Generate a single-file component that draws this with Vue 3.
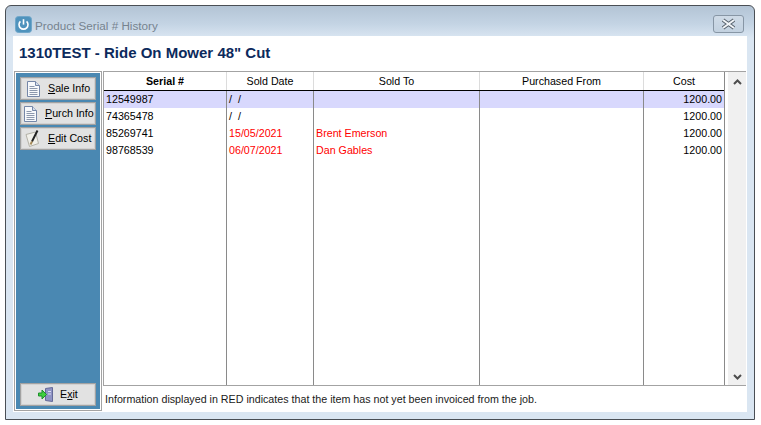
<template>
  <div class="window">
    <div class="titlebar">
      <svg class="app-icon" width="17" height="17" viewBox="0 0 17 17">
        <rect x="0.5" y="0.5" width="16" height="16" rx="3" fill="#4f93bd" stroke="#6fa6c9" />
        <path d="M5.4 5.4a4.500 4.500 0 1 0 6.200 0" fill="none" stroke="#fff" stroke-width="1.600" />
        <path d="M8.500 3.200v5.400" fill="none" stroke="#fff" stroke-width="1.600" />
      </svg>
      <span class="title">Product Serial # History</span>
      <button class="close" type="button">
        <svg width="17" height="12" viewBox="0 0 17 12">
          <path d="M3 2l11 8M14 2L3 10" stroke="#56616c" stroke-width="4" fill="none" />
          <path d="M3 2l11 8M14 2L3 10" stroke="#f2f5f8" stroke-width="2" fill="none" />
        </svg>
      </button>
    </div>

    <div class="client">
      <h1 class="heading">1310TEST - Ride On Mower 48" Cut</h1>

      <div class="content">
        <aside class="sidebar">
          <div class="side-inner">
            <button
              v-for="b in actions"
              :key="b.rest"
              class="side-btn"
              :class="b.cls"
              type="button"
            >
              <span class="btn-icon" v-html="b.icon" />
              <span class="btn-label"><u>{{ b.key }}</u>{{ b.rest }}</span>
            </button>
            <div class="spacer"></div>
            <button class="side-btn exit" type="button">
              <span class="btn-icon" v-html="exitIcon" />
              <span class="btn-label">E<u>x</u>it</span>
            </button>
          </div>
        </aside>

        <main class="main">
          <div class="grid-wrap">
            <div class="grid">
              <div class="row head">
                <div v-for="c in columns" :key="c" class="cell">{{ c }}</div>
              </div>
              <div
                v-for="(r, i) in rows"
                :key="r.serial"
                class="row"
                :class="{ selected: i === 0 }"
              >
                <div class="cell">{{ r.serial }}</div>
                <div class="cell" :class="{ red: r.red }">{{ r.date }}</div>
                <div class="cell" :class="{ red: r.red }">{{ r.to }}</div>
                <div class="cell"></div>
                <div class="cell num">{{ r.cost }}</div>
              </div>
              <div class="row filler">
                <div class="cell" v-for="n in 5" :key="n"></div>
              </div>
            </div>
            <div class="scrollbar">
              <svg width="9" height="6" viewBox="0 0 9 6"><path d="M1 5l3.500-3.500L8 5" fill="none" stroke="#4d4d4d" stroke-width="2" /></svg>
              <svg width="9" height="6" viewBox="0 0 9 6"><path d="M1 1l3.500 3.500L8 1" fill="none" stroke="#4d4d4d" stroke-width="2" /></svg>
            </div>
          </div>
          <p class="note">Information displayed in RED indicates that the item has not yet been invoiced from the job.</p>
        </main>
      </div>
    </div>
  </div>
</template>

<script setup>
const columns = ['Serial #', 'Sold Date', 'Sold To', 'Purchased From', 'Cost']

const rows = [
  { serial: '12549987', date: '/  /', to: '', cost: '1200.00', red: false },
  { serial: '74365478', date: '/  /', to: '', cost: '1200.00', red: false },
  { serial: '85269741', date: '15/05/2021', to: 'Brent Emerson', cost: '1200.00', red: true },
  { serial: '98768539', date: '06/07/2021', to: 'Dan Gables', cost: '1200.00', red: true }
]

const docIcon = `
<svg width="13" height="16" viewBox="0 0 13 16">
  <path d="M.5 .5h8l4 4v11H.5z" fill="#f7f9fc" stroke="#7587a8" />
  <path d="M8.500 .5v4h4" fill="#d5deeb" stroke="#7587a8" />
  <path d="M2.500 5.500h5M2.500 7.500h8M2.500 9.500h8M2.500 11.500h8M2.500 13.500h8" stroke="#8c98ad" />
</svg>`

const actions = [
  { key: 'S', rest: 'ale Info', icon: docIcon, cls: 'sale' },
  { key: 'P', rest: 'urch Info', icon: docIcon, cls: 'purch' },
  {
    key: 'E',
    rest: 'dit Cost',
    cls: 'edit',
    icon: `
<svg width="16" height="17" viewBox="0 0 16 17">
  <path d="M1 4.500l9.500-2.500 3 11.500-9 3z" fill="#f1f0ea" stroke="#b3b1a7" />
  <path d="M12.500 .5l-5.500 11" stroke="#222" stroke-width="2" />
  <path d="M7 11.500l-1.500 3" stroke="#a58a5a" stroke-width="2" />
</svg>`
  }
]

const exitIcon = `
<svg width="16" height="15" viewBox="0 0 16 15">
  <path d="M7.500 1.500l7-1v14l-7-1z" fill="#8f93c4" stroke="#646a98" />
  <path d="M10 4.500h3M10 7h3" stroke="#dcdef2" />
  <path d="M.5 6h3.500V3l4.500 4.500L4 12V9H.5z" fill="#3fcf3f" stroke="#1f8f2c" />
</svg>`
</script>

<style>
html,
body {
  margin: 0;
  background: #fff;
}
</style>

<style scoped>
.window {
  box-sizing: border-box;
  width: 750px;
  height: 415px;
  margin: 5px 0 0 5px;
  padding: 0 7px 7px 7px;
  display: flex;
  flex-direction: column;
  border: 1px solid #4a4f55;
  border-radius: 6px 6px 0 0;
  background: linear-gradient(#b3c4d5 0, #c4d4e4 18px, #dae6f2 32px);
  font-family: "Liberation Sans", Arial, sans-serif;
  font-size: 10.7px;
  color: #000;
}

.titlebar {
  box-sizing: border-box;
  height: 30px;
  flex: none;
  display: flex;
  align-items: flex-start;
  padding: 10px 3px 0 2px;
}

.app-icon {
  flex: none;
}

.title {
  margin: 1px 0 0 3px;
  font-size: 11.700px;
  line-height: 17px;
  color: #76838f;
}

.close {
  margin-left: auto;
  margin-top: -1px;
  width: 31px;
  height: 18px;
  padding: 0;
  display: flex;
  align-items: center;
  justify-content: center;
  background: linear-gradient(#cfdbe7, #c2d1e0);
  border: 1px solid #8796a5;
  border-radius: 3px;
}

.client {
  flex: 1;
  min-height: 0;
  display: flex;
  flex-direction: column;
  background: #fff;
}

.heading {
  height: 35px;
  margin: 0;
  flex: none;
  padding-left: 6px;
  font-size: 15px;
  line-height: 34px;
  font-weight: 700;
  color: #0c2a5c;
}

.content {
  flex: 1;
  min-height: 0;
  display: flex;
  padding: 0 1px 1px;
}

.sidebar {
  box-sizing: border-box;
  width: 88px;
  flex: none;
  border: 1px solid #a3a3a3;
  background: #fff;
  padding: 1px;
}

.side-inner {
  box-sizing: border-box;
  height: 100%;
  padding: 4px 4px 3px;
  display: flex;
  flex-direction: column;
  gap: 2px;
  background: #4a88b2;
}

.spacer {
  flex: 1;
}

.side-btn {
  box-sizing: border-box;
  width: 76px;
  height: 23px;
  flex: none;
  display: flex;
  align-items: center;
  border: 1px solid #a2a2a2;
  box-shadow: inset 0 0 0 1px #d2d2d2;
  background: #e2e2e2;
  font: inherit;
  color: #000;
  white-space: nowrap;
}

.side-btn.sale {
  padding: 0 0 0 6px;
  gap: 8px;
}

.side-btn.purch {
  padding: 0 0 0 3px;
  gap: 8px;
}

.side-btn.edit {
  padding: 0 0 0 4px;
  gap: 7px;
}

.side-btn.exit {
  padding: 0 0 0 17px;
  gap: 6px;
}

.btn-icon {
  display: flex;
  flex: none;
}

.btn-label {
  margin-bottom: 2px;
}

.main {
  flex: 1;
  min-width: 0;
  margin-left: 1px;
  display: flex;
  flex-direction: column;
}

.grid-wrap {
  box-sizing: border-box;
  height: 315px;
  flex: none;
  display: flex;
  border-top: 1px solid #a3a3a3;
  border-left: 1px solid #a3a3a3;
  border-bottom: 1px solid #a3a3a3;
}

.grid {
  box-sizing: border-box;
  width: 621px;
  flex: none;
  display: flex;
  flex-direction: column;
  border-right: 1px solid #8a8a8a;
}

.row {
  height: 17px;
  flex: none;
  display: grid;
  grid-template-columns: 123px 87px 166px 164px 1fr;
}

.row.head {
  height: 18px;
  border-bottom: 1px solid #000;
  box-sizing: content-box;
}

.row.selected {
  background: #d8d8fd;
}

.row.filler {
  flex: 1;
  min-height: 0;
}

.cell {
  box-sizing: border-box;
  padding: 0 2px;
  line-height: 17px;
  border-right: 1px solid #8a8a8a;
  white-space: pre;
  overflow: hidden;
}

.cell:last-child {
  border-right: 0;
}

.head .cell {
  line-height: 19px;
  text-align: center;
  border-right-color: #dcdcdc;
}

.head .cell:first-child {
  font-weight: 700;
}

.red {
  color: #f00;
}

.num {
  text-align: right;
}

.scrollbar {
  box-sizing: border-box;
  width: 18px;
  margin-left: 3px;
  padding: 7px 0 5px;
  display: flex;
  flex-direction: column;
  align-items: center;
  justify-content: space-between;
  background: #f0f0f0;
}

.note {
  margin: 0;
  padding: 7px 0 0 2px;
  line-height: 13px;
  color: #1a1a1a;
}
</style>
